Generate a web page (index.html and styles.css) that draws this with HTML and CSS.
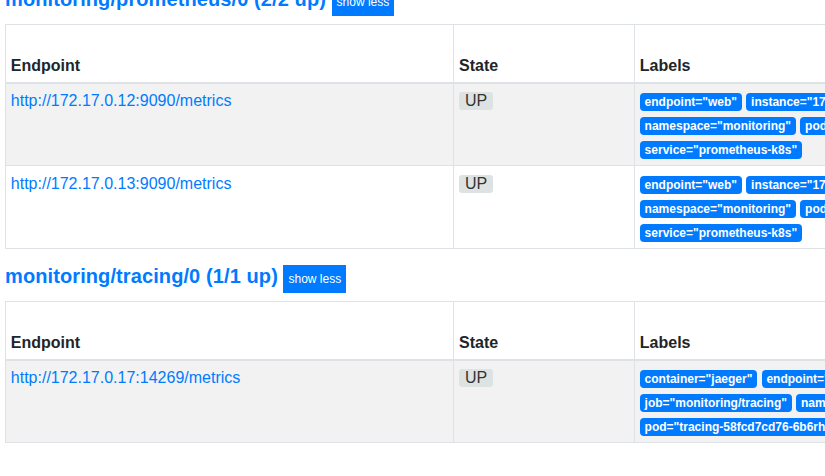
FILE: index.html
```html
<!DOCTYPE html>
<html lang="en">
<head>
<meta charset="utf-8">
<title>Targets</title>
<link rel="stylesheet" href="styles.css">
</head>
<body>
<div class="viewport">
  <div class="targets">
    <section class="job">
      <h2 class="job-title"><a href="#monitoring/prometheus/0" class="job-link">monitoring/prometheus/0 (2/2 up)</a> <button type="button" class="toggle">show less</button></h2>
      <table class="target-table">
        <thead>
          <tr>
            <th class="col-endpoint">Endpoint</th>
            <th class="col-state">State</th>
            <th class="col-labels">Labels</th>
            <th class="col-scrape">Last Scrape</th>
            <th class="col-duration">Scrape Duration</th>
            <th class="col-error">Error</th>
          </tr>
        </thead>
        <tbody>
          <tr class="striped">
            <td><a href="#" class="endpoint">http://172.17.0.12:9090/metrics</a></td>
            <td><span class="state">UP</span></td>
            <td class="labels">
              <span class="label">endpoint="web"</span>
              <span class="label">instance="172.17.0.12:9090"</span>
              <span class="label">job="monitoring/prometheus"</span>
              <span class="label">namespace="monitoring"</span>
              <span class="label">pod="prometheus-k8s-0"</span>
              <span class="label">service="prometheus-k8s"</span>
            </td>
            <td>4.112s ago</td>
            <td>11.8ms</td>
            <td></td>
          </tr>
          <tr>
            <td><a href="#" class="endpoint">http://172.17.0.13:9090/metrics</a></td>
            <td><span class="state">UP</span></td>
            <td class="labels">
              <span class="label">endpoint="web"</span>
              <span class="label">instance="172.17.0.13:9090"</span>
              <span class="label">job="monitoring/prometheus"</span>
              <span class="label">namespace="monitoring"</span>
              <span class="label">pod="prometheus-k8s-1"</span>
              <span class="label">service="prometheus-k8s"</span>
            </td>
            <td>9.407s ago</td>
            <td>13.2ms</td>
            <td></td>
          </tr>
        </tbody>
      </table>
    </section>

    <section class="job">
      <h2 class="job-title"><a href="#monitoring/tracing/0" class="job-link">monitoring/tracing/0 (1/1 up)</a> <button type="button" class="toggle">show less</button></h2>
      <table class="target-table">
        <thead>
          <tr>
            <th class="col-endpoint">Endpoint</th>
            <th class="col-state">State</th>
            <th class="col-labels">Labels</th>
            <th class="col-scrape">Last Scrape</th>
            <th class="col-duration">Scrape Duration</th>
            <th class="col-error">Error</th>
          </tr>
        </thead>
        <tbody>
          <tr class="striped">
            <td><a href="#" class="endpoint">http://172.17.0.17:14269/metrics</a></td>
            <td><span class="state">UP</span></td>
            <td class="labels">
              <span class="label">container="jaeger"</span>
              <span class="label">endpoint="query"</span>
              <span class="label">instance="172.17.0.17:14269"</span>
              <span class="label">job="monitoring/tracing"</span>
              <span class="label">namespace="monitoring"</span>
              <span class="label">pod="tracing-58fcd7cd76-6b6rh"</span>
              <span class="label">service="tracing"</span>
            </td>
            <td>2.731s ago</td>
            <td>3.9ms</td>
            <td></td>
          </tr>
        </tbody>
      </table>
    </section>
  </div>
</div>
</body>
</html>
```
FILE: styles.css
```css
html, body {
  margin: 0;
  padding: 0;
  background: #fff;
}

body {
  font-family: "Liberation Sans", Arial, sans-serif;
  font-size: 16px;
  line-height: 1.5;
  color: #212529;
}

.viewport {
  width: 825px;
  height: 476px;
  overflow: hidden;
}

.targets {
  margin-top: -12px;
  padding: 0 5px;
  width: 1400px;
}

.job-title {
  margin: 0 0 8px;
  font-size: 20px;
  line-height: 22px;
  font-weight: 700;
}

.job-link {
  color: #007bff;
  text-decoration: none;
  letter-spacing: 0.1px;
}

.toggle {
  display: inline-block;
  margin: 0;
  padding: 5px;
  border: 0;
  border-radius: 0;
  background: #007bff;
  color: #fff;
  font-family: "Liberation Sans", Arial, sans-serif;
  font-size: 12px;
  line-height: 18px;
  font-weight: 400;
  vertical-align: baseline;
}

.target-table {
  border-collapse: collapse;
  table-layout: fixed;
  margin-bottom: 16px;
  border: 1px solid #dee2e6;
}

.target-table th,
.target-table td {
  border: 1px solid #dee2e6;
  padding: 4.8px;
  text-align: left;
  vertical-align: top;
}

.target-table th {
  vertical-align: bottom;
  font-weight: 700;
  border-bottom-width: 2px;
  padding-bottom: 4px;
}

.target-table td {
  padding-top: 5.6px;
  padding-bottom: 4px;
}

.col-endpoint { width: 439px; }
.col-state { width: 171px; }
.col-labels { width: 470px; }
.col-scrape { width: 90px; }
.col-duration { width: 90px; }
.col-error { width: 80px; }

.striped td {
  background: #f2f2f2;
}

.endpoint {
  color: #007bff;
  text-decoration: none;
}

.state {
  display: inline-block;
  margin-top: 2px;
  padding: 0 6px;
  line-height: 18px;
  background: #dde3e3;
  border-radius: 3px;
  color: #333;
}

.label {
  display: inline-block;
  padding: 3px 4.8px;
  font-size: 12px;
  line-height: 1;
  font-weight: 700;
  color: #fff;
  background: #007bff;
  border-radius: 4px;
  white-space: nowrap;
}
```
